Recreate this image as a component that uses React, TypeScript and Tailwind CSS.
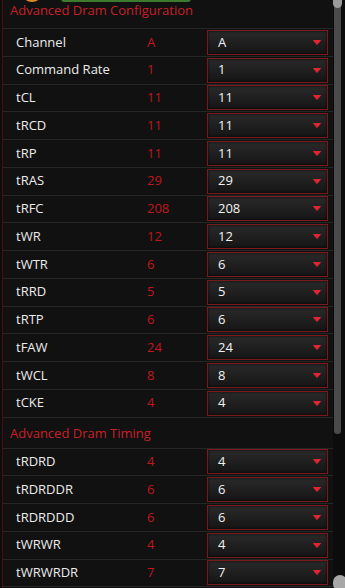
type Row = { name: string; value: string };

const CONFIG: Row[] = [
  { name: 'Channel', value: 'A' },
  { name: 'Command Rate', value: '1' },
  { name: 'tCL', value: '11' },
  { name: 'tRCD', value: '11' },
  { name: 'tRP', value: '11' },
  { name: 'tRAS', value: '29' },
  { name: 'tRFC', value: '208' },
  { name: 'tWR', value: '12' },
  { name: 'tWTR', value: '6' },
  { name: 'tRRD', value: '5' },
  { name: 'tRTP', value: '6' },
  { name: 'tFAW', value: '24' },
  { name: 'tWCL', value: '8' },
  { name: 'tCKE', value: '4' },
];

const TIMING: Row[] = [
  { name: 'tRDRD', value: '4' },
  { name: 'tRDRDDR', value: '6' },
  { name: 'tRDRDDD', value: '6' },
  { name: 'tWRWR', value: '4' },
  { name: 'tWRWRDR', value: '7' },
];

function Caret() {
  return (
    <svg width="8" height="5" viewBox="0 0 8 5" className="shrink-0">
      <path d="M0.5 0.5 L7.5 0.5 L4 4.5 Z" fill="#e0262e" stroke="#e0262e" strokeLinejoin="round" />
    </svg>
  );
}

function SettingRow({ row }: { row: Row }) {
  return (
    <div className="flex h-[27.75px] items-center border-b border-[#262626]">
      <span className="w-[144px] pl-[13px] text-[13px] text-[#ececec]">{row.name}</span>
      <span className="w-[60px] text-[13px] text-[#c0161e]">{row.value}</span>
      <div className="flex h-[25px] w-[121px] items-center justify-between border border-[#7a1a1e] bg-gradient-to-b from-[#2a2a2a] to-[#151515] pl-[10px] pr-[6px] shadow-[inset_0_0_3px_rgba(0,0,0,0.8)]">
        <span className="text-[13px] font-medium text-[#f2f2f2]">{row.value}</span>
        <Caret />
      </div>
    </div>
  );
}

function SectionTitle({ children }: { children: string }) {
  return (
    <div className="pl-[7px] text-[13px] leading-[16px] text-[#c8202a]">{children}</div>
  );
}

export default function App() {
  return (
    <div className="relative flex h-[588px] w-[345px] overflow-hidden bg-[#0c0c0c] font-['Open_Sans',sans-serif]">
      <div className="ml-[2px] flex w-[331px] flex-col border-l border-[#4a0e10] bg-[#111111]">
        {/* cut-off header logo, only its lower edge is visible */}
        <div className="flex h-[2px] items-end gap-[18px] overflow-hidden pl-[18px]">
          <div className="h-[22px] w-[22px] shrink-0 rounded-full bg-[#d98a2a]" />
          <div className="h-[3px] w-[130px] rounded-b bg-[#3c7a2e]" />
        </div>
        <div className="flex h-[26px] items-start">
          <SectionTitle>Advanced Dram Configuration</SectionTitle>
        </div>
        <div className="border-t border-[#262626]">
          {CONFIG.map((r) => (
            <SettingRow key={r.name} row={r} />
          ))}
        </div>
        <div className="flex h-[30px] items-center">
          <SectionTitle>Advanced Dram Timing</SectionTitle>
        </div>
        <div className="border-t border-[#262626]">
          {TIMING.map((r) => (
            <SettingRow key={r.name} row={r} />
          ))}
        </div>
      </div>
      {/* scrollbar */}
      <div className="flex w-[12px] flex-col pl-[1px]">
        <div className="relative h-[434px] w-[7px] rounded-b-full bg-[#4a4a4a]">
          <div className="absolute -top-[4px] left-[-1px] h-[12px] w-[9px] rounded-full bg-[#9a9a9a]" />
        </div>
      </div>
      <div className="absolute bottom-[-3px] right-[-2px] h-[16px] w-[14px] rounded-full bg-[#a8a8a8]" />
    </div>
  );
}
